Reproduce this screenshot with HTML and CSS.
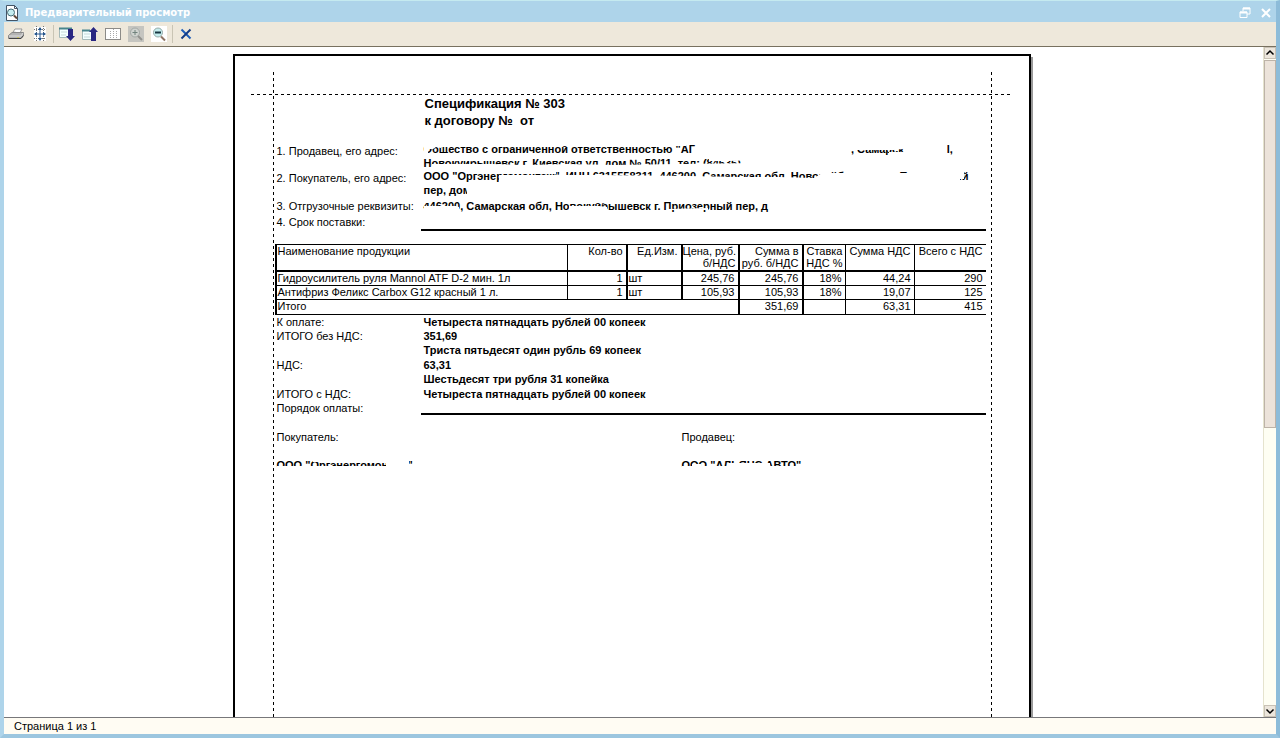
FILE: index.html
```html
<!DOCTYPE html>
<html lang="ru">
<head>
<meta charset="utf-8">
<title>Предварительный просмотр</title>
<link rel="stylesheet" href="styles.css">
</head>
<body>
<div class="window">
  <header class="titlebar">
    <svg class="icon" viewBox="0 0 16 16"><path d="M2.5.5h8l3 3v12h-11z" fill="#fff" stroke="#456"/><path d="M10.500.5v3h3" fill="none" stroke="#456"/><circle cx="7" cy="7.500" r="3.500" fill="#c5edf0" stroke="#456b75"/><path d="M10 10.500l3 3" stroke="#604838" stroke-width="2"/></svg>
    <h1 class="caption">Предварительный просмотр</h1>
    <button class="winbtn" aria-label="Восстановить"><svg viewBox="0 0 12 12"><path d="M4 4V1h7v6H8" fill="none" stroke="#fff"/><path d="M4 1.500h7" stroke="#fff" stroke-width="2"/><path d="M1 5h7v5.500H1z" fill="none" stroke="#fff"/><path d="M1 5.500h7" stroke="#fff" stroke-width="2"/></svg></button>
    <button class="winbtn" aria-label="Закрыть окно"><svg viewBox="0 0 12 12"><path d="M2 2l8 8M10 2l-8 8" stroke="#fff" stroke-width="2"/></svg></button>
  </header>

  <nav class="toolbar" aria-label="Инструменты">
    <button class="tool" aria-label="Печать"><svg class="icon" viewBox="0 0 16 16"><path d="M5 6l2-3h7l-2 4z" fill="#fff" stroke="#999"/><path d="M.5 9.500L4 6.500h11.500v3L13 12.500H.5z" fill="#b4b4b4" stroke="#888"/><path d="M1 10h12l2-3" fill="none" stroke="#ddd"/><path d="M1 12.500h12l2.500-3" fill="none" stroke="#444"/><path d="M9 11.500h2" stroke="#c8c060"/></svg></button>
    <button class="tool" aria-label="Параметры страницы"><svg class="icon" viewBox="0 0 16 16"><path d="M2 1h12v14H2z" fill="#fff"/><path d="M4.500 0v16M11.500 0v16M2 3.500h12M2 12.500h12" stroke="#777" stroke-dasharray="1 1"/><path d="M8 2v12M3 8h10" stroke="#24558c"/><path d="M8 1l2 3H6zM8 15l2-3H6zM2 8l3-2v4zM14 8l-3-2v4z" fill="#24558c"/></svg></button>
    <span class="sep"></span>
    <button class="tool" aria-label="Следующая страница"><svg class="icon" viewBox="0 0 16 16"><path d="M.5 2.500h12v9H.5z" fill="#f4ffff" stroke="#a5b9b9"/><path d="M0 2.500h13" stroke="#48858c" stroke-width="2"/><path d="M2 6h6M2 9h5" stroke="#c5d9d9"/><path d="M9 3h5v7h2L11.500 15 7 10h2z" fill="#292782"/></svg></button>
    <button class="tool" aria-label="Предыдущая страница"><svg class="icon" viewBox="0 0 16 16"><path d="M.5 4.500h12v9H.5z" fill="#f4ffff" stroke="#a5b9b9"/><path d="M0 4.500h8" stroke="#48858c" stroke-width="2"/><path d="M2 8h6M2 11h6" stroke="#c5d9d9"/><path d="M9 15h5V6h2L11.500 1 7 6h2z" fill="#292782"/></svg></button>
    <button class="tool" aria-label="Область печати"><svg class="icon" viewBox="0 0 16 16"><path d="M.5 2.500h15v11H.5z" fill="#fff" stroke="#222" stroke-dasharray="1 1"/><path d="M8.500 3v10M5.500 5v7M11.500 5v7" stroke="#aaa" stroke-dasharray="1 1"/></svg></button>
    <button class="tool" aria-label="Увеличить" disabled><svg class="icon" viewBox="0 0 16 16"><path d="M0 0h16v16H0z" fill="#c5c5c0"/><circle cx="7" cy="6.500" r="4.500" fill="#cfd3cf" stroke="#a2a8a5"/><path d="M4.500 6.500h5M7 4v5" stroke="#70827d"/><path d="M10 10l4 4" stroke="#92928e" stroke-width="2"/></svg></button>
    <button class="tool" aria-label="Уменьшить"><svg class="icon" viewBox="0 0 16 16"><path d="M0 0h16v16H0z" fill="#fff"/><circle cx="7" cy="6.500" r="4.500" fill="#c5edee" stroke="#96aaa8"/><path d="M4 6.500h6" stroke="#173641" stroke-width="2"/><path d="M10 10.500l4 4" stroke="#8f7464" stroke-width="2"/></svg></button>
    <span class="sep"></span>
    <button class="tool" aria-label="Закрыть"><svg class="icon" viewBox="0 0 16 16"><path d="M3.500 3.500l9 9" stroke="#1c5cb8" stroke-width="2"/><path d="M12.500 3.500l-9 9" stroke="#123a86" stroke-width="2"/></svg></button>
  </nav>

  <div class="work">
    <main class="view">
      <article class="paper">
        <i class="guide guide-top"></i><i class="guide guide-left"></i><i class="guide guide-right"></i>
        <h2 class="doc-title">Спецификация № 303<br>к договору №&nbsp; от</h2>

        <dl class="fields requisites">
          <dt>1. Продавец, его адрес:</dt>
          <dd>
            <div class="line">Общество с ограниченной ответственностью "АГ<span class="frag-a">, Самарск</span><span class="frag-b">l,</span>
              <svg class="erase" viewBox="0 0 562 14"><path d="M0 0h17v6l-5-1-3 2H4v7H0zM17 0h245v4H17zM0 11h270v3H0zM425 0h83v6l-30 1-8 1h-45zM465 10h25v3h-25z"/></svg></div>
            <div class="line">Новокуйбышевск г, Киевская ул, дом № 50/11, тел: (84635)
              <svg class="erase" viewBox="0 0 562 14"><path d="M8 0h70v5H8zM8 8l60 0 35 1 40-1 50 1 60-1 80-1v8H8zM285 0h50v4l-30 1h-20z"/></svg></div>
          </dd>
          <dt>2. Покупатель, его адрес:</dt>
          <dd>
            <div class="line">ООО "Оргэнергомонтаж", ИНН 6315558311, 446200, Самарская обл, Новокуйбышевск г, Приозерный
              <svg class="erase" viewBox="0 0 562 14"><path d="M75 6l60 0 40 0 90 1 50 1 40 0 35 1 8-5h138v10H75zM74 0h58v5H74zM422 0h50v10h-50zM490 0h50v10h-50z"/></svg></div>
            <div class="line">пер, дом
              <svg class="erase" viewBox="0 0 562 14"><path d="M43 0h25v14H43z"/></svg></div>
          </dd>
          <dt class="tight">3. Отгрузочные реквизиты:</dt>
          <dd>
            <div class="line">446200, Самарская обл, Новокуйбышевск г. Приозерный пер, д
              <svg class="erase" viewBox="0 0 562 14"><path d="M0 0h5v4H0zM0 7h32l3 1v6H0zM146 0h28v4h-28zM145 7h30l8 1v6h-38zM174 0h12v4h-12zM244 10l40-1v2h-40z"/></svg></div>
          </dd>
          <dt class="tight">4. Срок поставки:</dt>
          <dd class="blank"></dd>
        </dl>

        <table class="goods">
          <colgroup><col class="c-name"><col class="c-qty"><col class="c-unit"><col class="c-price"><col class="c-sum"><col class="c-rate"><col class="c-vat"><col class="c-total"></colgroup>
          <thead>
            <tr><th class="left">Наименование продукции</th><th>Кол-во</th><th class="thick">Ед.Изм.</th><th class="thick snug">Цена, руб.<br>б/НДС</th><th class="thick">Сумма в<br>руб. б/НДС</th><th class="thick snug">Ставка<br>НДС %</th><th>Сумма НДС</th><th>Всего с НДС</th></tr>
          </thead>
          <tbody>
            <tr><td class="left">Гидроусилитель руля Mannol ATF D-2 мин. 1л</td><td>1</td><td class="thick left">шт</td><td class="thick">245,76</td><td class="thick">245,76</td><td class="thick">18%</td><td>44,24</td><td>290</td></tr>
            <tr><td class="left">Антифриз Феликс Carbox G12 красный 1 л.</td><td>1</td><td class="thick left">шт</td><td class="thick">105,93</td><td class="thick">105,93</td><td class="thick">18%</td><td>19,07</td><td>125</td></tr>
          </tbody>
          <tfoot>
            <tr><td class="left" colspan="4">Итого</td><td class="thick">351,69</td><td class="thick"></td><td>63,31</td><td>415</td></tr>
          </tfoot>
        </table>

        <dl class="fields totals">
          <dt>К оплате:</dt><dd>Четыреста пятнадцать рублей 00 копеек</dd>
          <dt>ИТОГО без НДС:</dt><dd>351,69<br>Триста пятьдесят один рубль 69 копеек</dd>
          <dt class="next">НДС:</dt><dd class="next">63,31<br>Шестьдесят три рубля 31 копейка</dd>
          <dt class="next">ИТОГО с НДС:</dt><dd class="next">Четыреста пятнадцать рублей 00 копеек</dd>
          <dt>Порядок оплаты:</dt><dd class="blank"></dd>
        </dl>

        <div class="parties">
          <section><p>Покупатель:</p>
            <div class="line party">ООО "Оргэнергомонтаж"
              <svg class="erase" viewBox="0 0 160 14"><path d="M36 0h73v4H36zM0 8h160v6H0zM109 0h23v14h-23z"/></svg></div></section>
          <section><p>Продавец:</p>
            <div class="line party">ООО "АЛЬЯНС АВТО"
              <svg class="erase" viewBox="0 0 160 14"><path d="M0 8h160v6H0zM46 5h42v9H46zM10 6h9v4h-9z"/></svg></div></section>
        </div>
      </article>
    </main>
    <aside class="scroll">
      <button class="arrow" aria-label="Вверх"><svg viewBox="0 0 10 10"><path d="M1.500 6.500L5 3l3.500 3.500" fill="none" stroke="#000" stroke-width="1.500"/></svg></button>
      <div class="track"><div class="thumb"></div></div>
      <button class="arrow" aria-label="Вниз"><svg viewBox="0 0 10 10"><path d="M1.500 3.500L5 7l3.500-3.500" fill="none" stroke="#000" stroke-width="1.500"/></svg></button>
    </aside>
  </div>
  <footer class="status">Страница 1 из 1</footer>
</div>
</body>
</html>
```
FILE: styles.css
```css
* { box-sizing: border-box; }
body { margin: 0; font: 11px/14px "Liberation Sans", Arial, sans-serif; color: #000; }
h1, h2, p, dl, dd { margin: 0; }
button { padding: 0; border: 0; background: none; display: flex; align-items: center; justify-content: center; }
svg { display: block; }

.window { height: 100vh; display: flex; flex-direction: column; background: #fff; border: 4px solid #aed4ea; border-top: 1px solid #c5eaf0; border-right-color: #8dbcd9; border-bottom-color: #9cc6df; }
.icon { width: 16px; height: 16px; }

.titlebar { flex: none; height: 21px; padding-top: 2px; display: flex; align-items: center; background: #aed4ea; }
.caption { flex: 1; margin-left: 5px; font: bold 10px/16px "DejaVu Sans", Verdana, sans-serif; color: #fff; }
.winbtn { width: 21px; height: 18px; }
.winbtn svg { width: 12px; height: 12px; }

.toolbar { flex: none; height: 25px; padding-left: 4px; display: flex; align-items: center; background: #eee8db; border-bottom: 1px solid #77705f; }
.tool { width: 16px; height: 16px; margin-right: 7px; }
.tool:first-child { margin-right: 8px; }
.sep { width: 1px; height: 18px; margin: 0 5px 0 -2px; background: #c9c4b4; }

.work { flex: 1; min-height: 0; display: flex; }
.view { flex: 1; overflow: hidden; padding: 7px 4px 0 0; }
.scroll { width: 13px; display: flex; flex-direction: column; background: #fefef3; border-left: 1px solid #e5e3ce; }
.arrow { flex: none; width: 12px; height: 12px; background: #ece6dc; border: 1px solid #c8c1b5; }
.arrow svg { width: 10px; height: 10px; }
.track { flex: 1; padding-top: 1px; }
.thumb { height: 57%; background: #ece3da; border: 1px solid #bdb3a8; }
.status { flex: none; height: 17px; padding: 1px 10px 0; border-top: 1px solid #77777a; background: #fffcf3; }

.paper { position: relative; max-width: 798px; min-height: 1100px; margin: 0 auto; padding: 39px 43px 0 40px; border: 2px solid #000; box-shadow: 2px 3px 0 #999; }
.guide { position: absolute; }
.guide-top { top: 38px; left: 16px; right: 19px; height: 1px; background: repeating-linear-gradient(90deg, #000 0 3px, transparent 3px 6px); }
.guide-left, .guide-right { top: 16px; bottom: 0; width: 1px; background: repeating-linear-gradient(#000 0 3px, transparent 3px 6px); }
.guide-left { left: 38px; }
.guide-right { right: 37px; }

.doc-title { margin-left: 150px; font-size: 13px; line-height: 17px; }
.fields { display: grid; grid-template-columns: 146px 1fr; }
.fields dt { padding-left: 2px; white-space: nowrap; }
.fields dd { padding-left: 3px; font-weight: bold; }
.requisites { margin-top: 13px; grid-template-rows: 27px 30px 16px 16px; }
.requisites dt { padding-top: 2px; }
.requisites dt.tight { padding-top: 0; }
.fields .blank { border-bottom: 2px solid #000; }

.line { position: relative; height: 14px; white-space: nowrap; font-weight: bold; }
.erase { position: absolute; left: 0; top: 0; width: 562px; height: 14px; fill: #fff; }
.party .erase { width: 160px; }
.frag-a { margin-left: 156px; }
.frag-b { margin-left: 43px; }

.goods { width: 100%; margin-top: 13px; table-layout: fixed; border-spacing: 0; border-top: 1px solid #000; border-left: 2px solid #000; }
.goods th, .goods td { height: 14px; padding: 0 3px 0 1px; border-bottom: 1px solid #000; border-left: 1px solid #000; font-weight: normal; line-height: 13px; text-align: right; vertical-align: top; white-space: nowrap; }
.goods th { height: 27px; border-bottom-width: 2px; line-height: 12px; }
.goods th.snug { padding: 0 2px 0 0; }
.goods tfoot td { height: 15px; }
.goods .thick { border-left-width: 2px; }
.goods .left { text-align: left; }
.goods th:first-child, .goods td:first-child { border-left: 0; }
.c-name { width: 290px; }
.c-qty { width: 59px; }
.c-unit { width: 55px; }
.c-price { width: 57px; }
.c-sum { width: 64px; }
.c-rate { width: 43px; }
.c-vat { width: 69px; }

.totals .next { margin-top: 1px; }
.parties { display: grid; grid-template-columns: 405px 1fr; margin-top: 15px; padding-left: 2px; }
.party { margin-top: 14px; }
```
